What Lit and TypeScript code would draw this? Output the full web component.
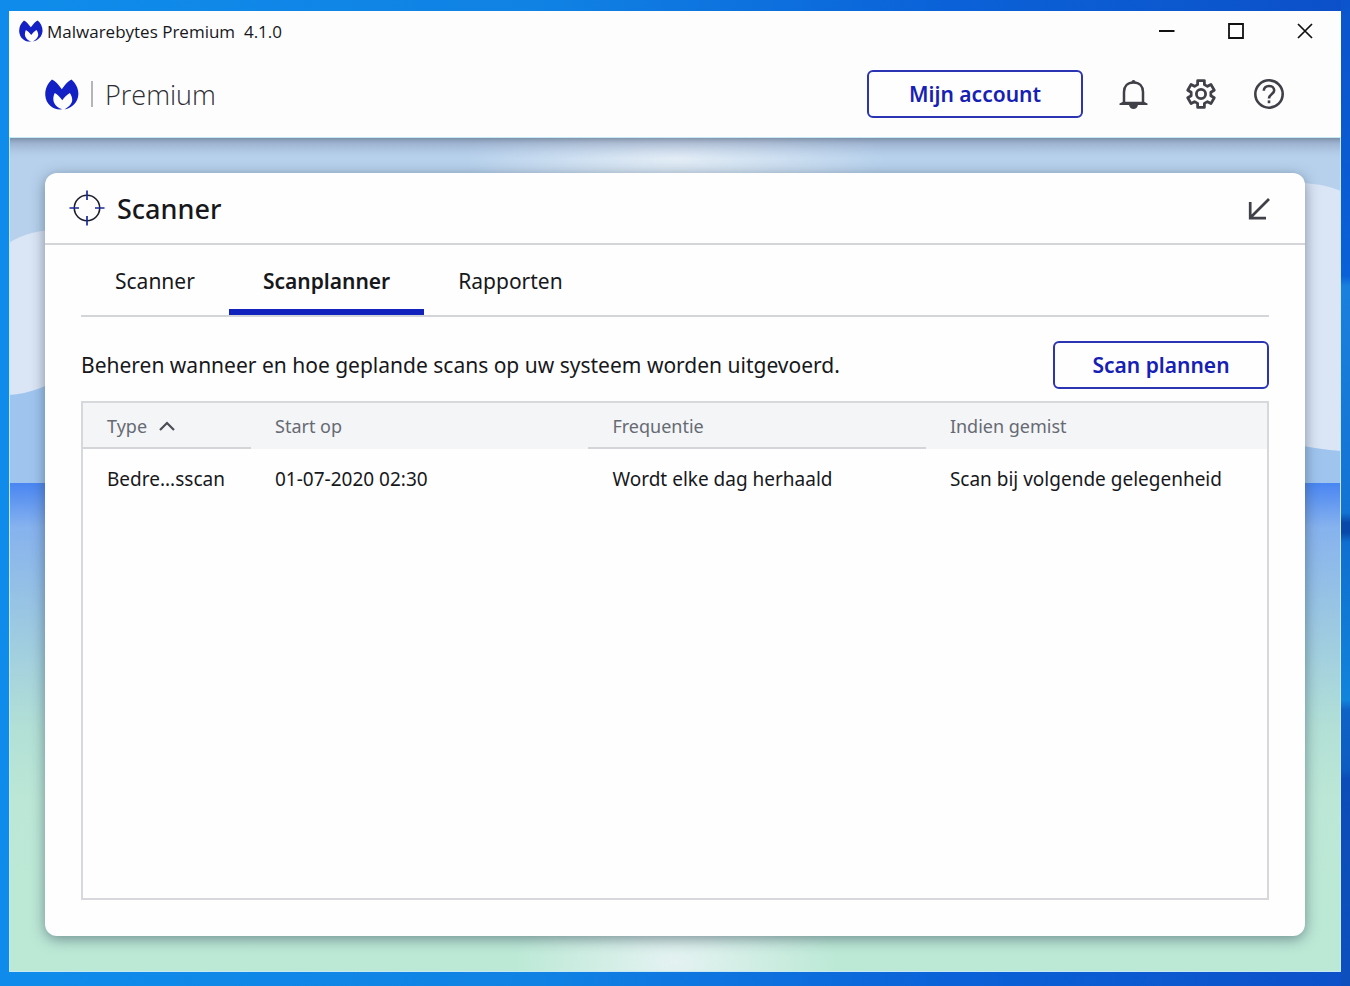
import { LitElement, html, css, svg } from "lit";
import { customElement, state } from "lit/decorators.js";
import { classMap } from "lit/directives/class-map.js";

const gearPath = (() => {
  const points: string[] = [];
  const add = (deg: number, r: number) => {
    const a = (deg * Math.PI) / 180;
    points.push(`${(16 + r * Math.sin(a)).toFixed(2)} ${(16 - r * Math.cos(a)).toFixed(2)}`);
  };
  for (let i = 0; i < 6; i++) {
    const c = i * 60;
    add(c - 20, 10);
    add(c - 14, 13.8);
    add(c + 14, 13.8);
    add(c + 20, 10);
  }
  return `M${points.join("L")}Z`;
})();

const logo = svg`
  <path fill="#1220c4" d="M7 0.500C10.500 2 13 5 16.800 10.200C20.500 5 23 2 26.500 0.500C31 4.500 33.800 10 33.300 16C32.800 23 27.500 29 19.500 30.500C23.500 28.200 26.800 25 27.200 21.500C27.400 19 26.300 16 24.800 14C22 15.500 19 18.500 17.300 21.300C15 18 12.500 15.500 9.800 14C8.500 16.500 7.800 20 8.800 23C10 26.300 13 29.300 17.500 30.300C8.500 31.500 1 25.500 0.300 16.500C-0.100 10 2.500 4.500 7 0.500Z"></path>`;

interface Scan {
  type: string;
  start: string;
  frequency: string;
  missed: string;
}

@customElement("app-root")
export class AppRoot extends LitElement {
  static styles = css`
    :host {
      box-sizing: border-box;
      display: flex;
      min-height: 100vh;
      padding: 11px 9px 14px;
      font-family: "Noto Sans", "Open Sans", sans-serif;
      color: #17181c;
      background:
        linear-gradient(#0b54cc, #0a60d8 28%, #1a80dd 29%, #1273d4 52%, #0848a8 53%, #0848a8 54%, #0f6fd0 55%, #1184dc 71%, #0f62c6 72%, #0d5cc2 78%, #0c4cb8 79%, #0d50bd) right / 9px 100% no-repeat,
        linear-gradient(90deg, #0f8ceb, #1082e4 40%, #0b62d8 70%, #0c50c8);
    }
    * { box-sizing: border-box; }
    svg { display: block; }
    button { font: inherit; color: inherit; background: none; border: 0; padding: 0; cursor: pointer; }
    .window { flex: 1; min-width: 0; display: flex; flex-direction: column; background: #fdfdfe; }
    .titlebar { display: flex; align-items: center; justify-content: space-between; height: 40px; padding: 0 2px 0 10px; }
    .caption { display: flex; align-items: center; gap: 4px; font-size: 17px; font-family: "Open Sans", sans-serif; white-space: pre; }
    .controls { display: flex; }
    .control { width: 69px; height: 40px; display: grid; place-items: center; }
    .header { display: flex; align-items: center; justify-content: space-between; height: 86px; padding: 0 54px 0 36px; }
    .brand { display: flex; align-items: center; gap: 12px; font-size: 27px; font-weight: 300; font-family: "Open Sans", sans-serif; color: #2d2d33; }
    .divider { width: 2px; height: 26px; background: #b4b6ba; }
    .actions { display: flex; align-items: center; gap: 32px; }
    .icon { width: 36px; height: 36px; display: grid; place-items: center; color: #404148; }
    .outline {
      min-width: 216px; height: 48px; border: 2px solid #2b34b2; border-radius: 6px;
      color: #1720b5; background: #fefefe; font-size: 21px; font-weight: 600;
    }
    .stage { position: relative; flex: 1; display: flex; padding: 36px; }
    .scenery { position: absolute; inset: 0; width: 100%; height: 100%; outline: 1px solid #c5e9f5; outline-offset: -1px; }
    .card {
      position: relative; flex: 1; min-width: 0; display: flex; flex-direction: column;
      background: #fefefe; border-radius: 12px; box-shadow: 0 3px 14px rgba(50, 65, 85, 0.55);
    }
    .card-head { display: flex; align-items: center; justify-content: space-between; height: 72px; padding: 0 28px 0 24px; border-bottom: 2px solid #d3d5d8; }
    .title { display: flex; align-items: center; gap: 12px; margin: 0; font-size: 27px; font-weight: 500; }
    .body { flex: 1; display: flex; flex-direction: column; padding: 0 36px 36px; }
    .tabs { display: flex; height: 72px; border-bottom: 2px solid #d3d5d8; }
    .tab { padding: 8px 34px 0; font-size: 21px; border-bottom: 6px solid transparent; }
    .tab.active { font-weight: 600; border-bottom-color: #1122bd; }
    .intro { display: flex; align-items: center; justify-content: space-between; gap: 24px; margin: 24px 0 12px; }
    .intro p { margin: 0; font-size: 21px; }
    .list { flex: 1; border: 2px solid #d6d8db; }
    table { width: 100%; table-layout: fixed; border-collapse: collapse; font-size: 19px; }
    th, td { padding: 0 0 0 24px; text-align: left; font-weight: 400; white-space: nowrap; }
    th { height: 46px; background: #f4f5f7; color: #666a73; font-size: 18px; }
    th:nth-child(odd) { box-shadow: inset 0 -2px #d3d5d8; }
    td { height: 60px; }
    .narrow { width: 168px; }
    .wide { width: 28.5%; }
    .sort { display: flex; align-items: center; gap: 12px; }
  `;

  @state() private tab = "Scanplanner";

  private scans: Scan[] = [
    {
      type: "Bedre...sscan",
      start: "01-07-2020 02:30",
      frequency: "Wordt elke dag herhaald",
      missed: "Scan bij volgende gelegenheid",
    },
  ];

  private scenery() {
    return html`<svg class="scenery" viewBox="0 0 1332 835" preserveAspectRatio="none" aria-hidden="true">
      <defs>
        <linearGradient id="ground" x1="0" y1="0" x2="0" y2="1">
          <stop offset="0" stop-color="#4a86f2"></stop>
          <stop offset="0.09" stop-color="#86b2ee"></stop>
          <stop offset="0.25" stop-color="#98c4e4"></stop>
          <stop offset="0.5" stop-color="#b2e0d6"></stop>
          <stop offset="0.65" stop-color="#bce7d6"></stop>
          <stop offset="1" stop-color="#bce9d6"></stop>
        </linearGradient>
        <linearGradient id="shade" x1="0" y1="0" x2="0" y2="1">
          <stop offset="0" stop-color="#5f6f86" stop-opacity="0.75"></stop>
          <stop offset="0.3" stop-color="#8090b0" stop-opacity="0.45"></stop>
          <stop offset="1" stop-color="#a9bfe0" stop-opacity="0"></stop>
        </linearGradient>
        <radialGradient id="glow">
          <stop offset="0" stop-color="#eef4f8" stop-opacity="0.8"></stop>
          <stop offset="1" stop-color="#eef4f8" stop-opacity="0"></stop>
        </radialGradient>
      </defs>
      <rect width="1332" height="348" fill="#b7d1ec"></rect>
      <rect y="200" width="1332" height="148" fill="#9fc5ef"></rect>
      <path fill="#dae5f5" d="M0 106Q20 92 60 92V236Q30 256 0 258Z"></path>
      <path fill="#dae5f5" d="M1270 46Q1310 44 1332 54V314Q1305 312 1270 304Z"></path>
      <rect y="346" width="1332" height="489" fill="url(#ground)"></rect>
      <ellipse cx="666" cy="20" rx="210" ry="60" fill="url(#glow)"></ellipse>
      <ellipse cx="666" cy="825" rx="160" ry="90" fill="url(#glow)"></ellipse>
      <rect width="1332" height="22" fill="url(#shade)"></rect>
    </svg>`;
  }

  render() {
    return html`
      <div class="window">
        <div class="titlebar">
          <div class="caption">
            <svg width="24" height="22" viewBox="0 0 34 31" aria-hidden="true">${logo}</svg>
            <span>Malwarebytes Premium  4.1.0</span>
          </div>
          <div class="controls">
            <button class="control" aria-label="Minimaliseren">
              <svg width="16" height="16" viewBox="0 0 16 16"><path d="M0 8H15.500" stroke="#111" stroke-width="2"></path></svg>
            </button>
            <button class="control" aria-label="Maximaliseren">
              <svg width="16" height="16" viewBox="0 0 16 16" fill="none" stroke="#111" stroke-width="1.800"><path d="M1 1H15V15H1Z"></path></svg>
            </button>
            <button class="control" aria-label="Sluiten">
              <svg width="16" height="16" viewBox="0 0 16 16" stroke="#111" stroke-width="1.700"><path d="M1 1L15 15M15 1L1 15"></path></svg>
            </button>
          </div>
        </div>
        <header class="header">
          <div class="brand">
            <svg width="34" height="31" viewBox="0 0 34 31" aria-hidden="true">${logo}</svg>
            <span class="divider"></span>
            <span>Premium</span>
          </div>
          <div class="actions">
            <button class="outline">Mijn account</button>
            <button class="icon" aria-label="Meldingen">
              <svg width="32" height="32" viewBox="0 0 32 32">
                <path d="M7 25V14C7 8.500 10.500 4.500 16.500 4.500S26 8.500 26 14V25" fill="none" stroke="currentColor" stroke-width="2.500"></path>
                <path d="M14.500 4A2 2 0 0 1 18.500 4ZM2.500 27V25.600L6 23.800H27L30.500 25.600V27ZM12 27H21Q20 31 16.500 31T12 27Z" fill="currentColor"></path>
              </svg>
            </button>
            <button class="icon" aria-label="Instellingen">
              <svg width="32" height="32" viewBox="0 0 32 32" fill="none" stroke="currentColor" stroke-width="2.800" stroke-linejoin="round">
                <path d=${gearPath}></path>
                <circle cx="16" cy="16" r="4.600"></circle>
              </svg>
            </button>
            <button class="icon" aria-label="Help">
              <svg width="32" height="32" viewBox="0 0 32 32" fill="none" stroke="currentColor" stroke-width="2.600">
                <circle cx="16" cy="16" r="13.700"></circle>
                <path d="M10.800 12.800C10.800 9.800 13 8 16 8S21.200 9.800 21.200 12.500C21.200 15.800 16 16.200 16 20.400"></path>
                <path d="M16 22.400V25.200"></path>
              </svg>
            </button>
          </div>
        </header>
        <main class="stage">
          ${this.scenery()}
          <section class="card">
            <div class="card-head">
              <h1 class="title">
                <svg width="36" height="36" viewBox="0 0 36 36" fill="none" aria-hidden="true">
                  <circle cx="18" cy="18" r="12.700" stroke="#1c1e2c" stroke-width="1.600"></circle>
                  <path d="M18 0.500V10M18 26V35.500M0.500 18H10M26 18H35.500" stroke="#1a2a9c" stroke-width="1.700"></path>
                </svg>
                Scanner
              </h1>
              <button class="icon" aria-label="Verkleinen">
                <svg width="24" height="24" viewBox="0 0 24 24" fill="none" stroke="currentColor" stroke-width="2.700">
                  <path d="M22 3L3 22M3.200 6V22.200H19"></path>
                </svg>
              </button>
            </div>
            <div class="body">
              <nav class="tabs" role="tablist">
                ${["Scanner", "Scanplanner", "Rapporten"].map(
                  (name) => html`<button
                    role="tab"
                    aria-selected=${name === this.tab}
                    class=${classMap({ tab: true, active: name === this.tab })}
                    @click=${() => (this.tab = name)}
                  >${name}</button>`
                )}
              </nav>
              <div class="intro">
                <p>Beheren wanneer en hoe geplande scans op uw systeem worden uitgevoerd.</p>
                <button class="outline">Scan plannen</button>
              </div>
              <div class="list">
                <table>
                  <thead>
                    <tr>
                      <th class="narrow" aria-sort="ascending">
                        <button class="sort">
                          Type
                          <svg width="16" height="10" viewBox="0 0 16 10" fill="none" stroke="#4b4e56" stroke-width="2.200" aria-hidden="true"><path d="M1 9L8 2L15 9"></path></svg>
                        </button>
                      </th>
                      <th class="wide">Start op</th>
                      <th class="wide">Frequentie</th>
                      <th>Indien gemist</th>
                    </tr>
                  </thead>
                  <tbody>
                    ${this.scans.map(
                      (s) => html`<tr><td>${s.type}</td><td>${s.start}</td><td>${s.frequency}</td><td>${s.missed}</td></tr>`
                    )}
                  </tbody>
                </table>
              </div>
            </div>
          </section>
        </main>
      </div>
    `;
  }
}
